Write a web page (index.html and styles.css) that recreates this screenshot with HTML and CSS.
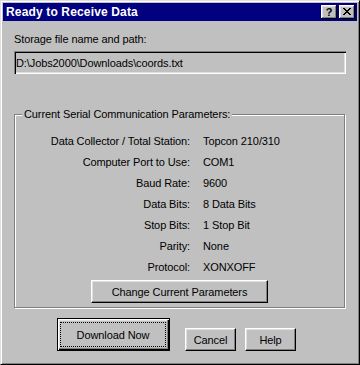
FILE: index.html
```html
<!DOCTYPE html>
<html lang="en">
<head>
    <meta charset="UTF-8">
    <meta name="viewport" content="width=device-width, initial-scale=1.0">
    <title>Ready to Receive Data</title>
    <link rel="stylesheet" href="styles.css">
</head>
<body>
    <div class="window">
        <div class="titlebar">
            <span class="title">Ready to Receive Data</span>
            <div class="title-buttons">
                <button class="cap-btn">?</button>
                <button class="cap-btn close-btn">
                    <svg width="8" height="7" viewBox="0 0 8 7" shape-rendering="crispEdges">
                        <path fill="#000" d="M0 0h2v1H0zM6 0h2v1H6zM1 1h2v1H1zM5 1h2v1H5zM2 2h4v1H2zM3 3h2v1H3zM2 4h4v1H2zM1 5h2v1H1zM5 5h2v1H5zM0 6h2v1H0zM6 6h2v1H6z"/>
                    </svg>
                </button>
            </div>
        </div>

        <div class="content">
            <div class="field-label">Storage file name and path:</div>
            <input class="field" type="text" value="D:\Jobs2000\Downloads\coords.txt" readonly>

            <fieldset class="group">
                <legend>Current Serial Communication Parameters:</legend>
                <div class="params">
                    <span class="key">Data Collector / Total Station:</span><span>Topcon 210/310</span>
                    <span class="key">Computer Port to Use:</span><span>COM1</span>
                    <span class="key">Baud Rate:</span><span>9600</span>
                    <span class="key">Data Bits:</span><span>8 Data Bits</span>
                    <span class="key">Stop Bits:</span><span>1 Stop Bit</span>
                    <span class="key">Parity:</span><span>None</span>
                    <span class="key">Protocol:</span><span>XONXOFF</span>
                </div>
                <div class="group-actions">
                    <button class="btn change-btn">Change Current Parameters</button>
                </div>
            </fieldset>

            <div class="actions">
                <button class="btn default-btn"><span class="focus">Download Now</span></button>
                <button class="btn small-btn cancel-btn">Cancel</button>
                <button class="btn small-btn">Help</button>
            </div>
        </div>
    </div>
</body>
</html>
```

FILE: styles.css
```css
* {
    box-sizing: border-box;
}
body {
    margin: 0;
    font-family: "Liberation Sans", Arial, sans-serif;
    font-size: 11px;
    letter-spacing: -0.1px;
    color: #000;
}
.window {
    width: 360px;
    height: 365px;
    background: #c0c0c0;
    border: 1px solid;
    border-color: #dfdfdf #000 #000 #dfdfdf;
    box-shadow: inset 1px 1px #fff, inset -1px -1px #808080;
    padding: 2px;
    display: flex;
    flex-direction: column;
}
.titlebar {
    height: 18px;
    background: #000080;
    color: #fff;
    display: flex;
    align-items: center;
    justify-content: space-between;
    padding: 0 2px 0 3px;
}
.title {
    font-weight: bold;
    font-size: 12px;
    letter-spacing: 0.15px;
}
.title-buttons {
    display: flex;
    gap: 2px;
}
.cap-btn {
    width: 16px;
    height: 14px;
    padding: 0;
    border: none;
    background: #c0c0c0;
    box-shadow: inset -1px -1px #000, inset 1px 1px #fff, inset -2px -2px #808080, inset 2px 2px #dfdfdf;
    display: flex;
    align-items: center;
    justify-content: center;
    font-family: "Liberation Sans", Arial, sans-serif;
    font-weight: bold;
    font-size: 11px;
    color: #000;
}
.close-btn svg {
    display: block;
    margin-top: -1px;
}
.content {
    flex: 1;
    padding: 12px 11px 0 11px;
}
.field-label {
    line-height: 13px;
}
.field {
    display: block;
    width: 100%;
    height: 23px;
    margin: 5px 0 0;
    padding: 0 2px;
    border: none;
    outline: none;
    background: #c0c0c0;
    box-shadow: inset 1px 1px #808080, inset 2px 2px #000, inset -1px -1px #fff, inset -2px -2px #dfdfdf;
    font: inherit;
    letter-spacing: -0.1px;
    color: #000;
}
.group {
    margin: 34px 1px 0 0;
    padding: 10px 0 4px;
    min-width: 0;
    border: 1px solid #808080;
    box-shadow: inset 1px 1px #fff, 1px 1px #fff;
}
.group legend {
    margin-left: 7px;
    padding: 0 2px;
    line-height: 13px;
    background: #c0c0c0;
}
.params {
    display: grid;
    grid-template-columns: 175px 1fr;
    column-gap: 13px;
    line-height: 21px;
}
.key {
    text-align: right;
}
.group-actions {
    display: flex;
    justify-content: center;
    margin-top: 2px;
}
.btn {
    background: #c0c0c0;
    border: 1px solid;
    border-color: #fff #000 #000 #fff;
    box-shadow: inset -1px -1px #808080, inset 1px 1px #dfdfdf;
    padding: 0;
    font: inherit;
    letter-spacing: -0.1px;
    color: #000;
}
.change-btn {
    width: 177px;
    height: 23px;
}
.actions {
    display: flex;
    align-items: flex-end;
    margin: 10px 0 0 43px;
}
.default-btn {
    width: 113px;
    height: 33px;
    margin-right: 15px;
    padding: 3px 3px 3px 2px;
    border: 1px solid #000;
    box-shadow: inset 1px 1px #fff, inset -1px -1px #000, inset -2px -2px #808080, inset 2px 2px #dfdfdf;
}
.focus {
    display: flex;
    align-items: center;
    justify-content: center;
    height: 100%;
    border: 1px dotted #000;
}
.small-btn {
    width: 51px;
    height: 23px;
}
.cancel-btn {
    margin-right: 9px;
}
```
